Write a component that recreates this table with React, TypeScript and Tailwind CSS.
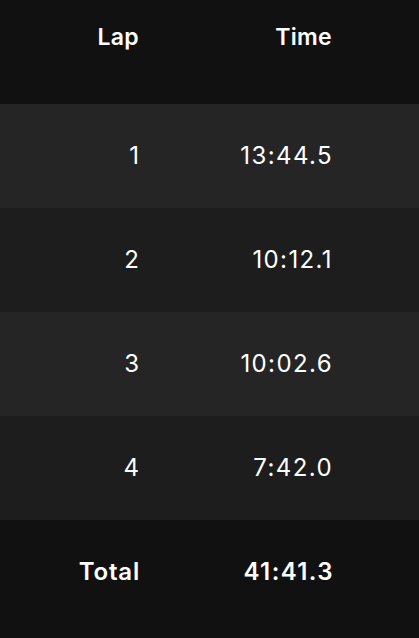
const laps = [
  { lap: '1', time: '13:44.5' },
  { lap: '2', time: '10:12.1' },
  { lap: '3', time: '10:02.6' },
  { lap: '4', time: '7:42.0' },
];

export default function App() {
  return (
    <div
      className="w-[419px] h-[638px] bg-[#111111] text-white flex flex-col"
      style={{ fontFamily: 'Inter, "Noto Sans", sans-serif' }}
    >
      <div className="h-[104px] flex pt-[21px] text-[23px] font-semibold leading-[32px] tracking-[0.3px]">
        <div className="w-[139px] text-right">Lap</div>
        <div className="w-[193px] text-right">Time</div>
      </div>

      {laps.map((item, index) => (
        <div
          key={item.lap}
          className={`h-[104px] flex items-center text-[24px] font-normal ${
            index % 2 === 0 ? 'bg-[#252525]' : 'bg-[#1d1d1d]'
          }`}
        >
          <div className="w-[139px] text-right">{item.lap}</div>
          <div className="w-[194px] text-right tracking-[1.4px]">{item.time}</div>
        </div>
      ))}

      <div className="h-[104px] flex items-center text-[24px] font-semibold">
        <div className="w-[140px] text-right tracking-[0.8px]">Total</div>
        <div className="w-[194px] text-right tracking-[1.4px]">41:41.3</div>
      </div>
    </div>
  );
}
